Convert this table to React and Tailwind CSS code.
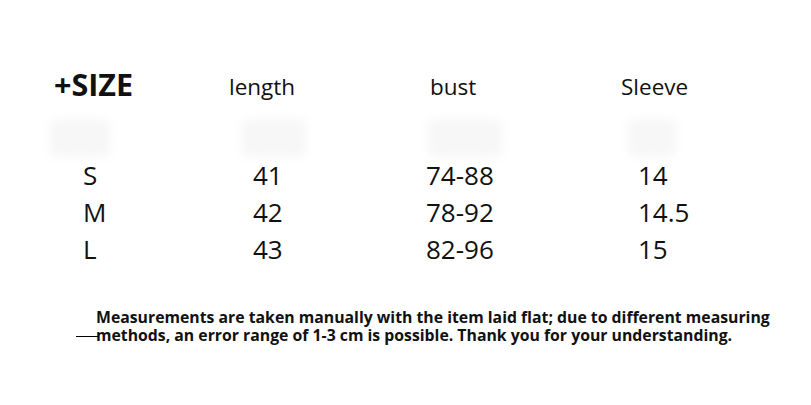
import React from "react";

const rows = [
  { size: "S", length: "41", bust: "74-88", sleeve: "14" },
  { size: "M", length: "42", bust: "78-92", sleeve: "14.5" },
  { size: "L", length: "43", bust: "82-96", sleeve: "15" },
];

function Smudge({ className }) {
  // faint blurry marks left under the header row
  return (
    <div className={`h-[38px] rounded-md bg-[#f7f7f7] blur-[5px] ${className}`} />
  );
}

export default function App() {
  return (
    <div
      className="h-[405px] w-[811px] overflow-hidden bg-white text-[#111]"
      style={{ fontFamily: "'Open Sans', 'Liberation Sans', sans-serif" }}
    >
      <div className="flex items-center pt-[65px]">
        <div className="-mt-[6px] w-[175px] pl-[54px] text-[30.5px] font-bold leading-[44px]">
          +SIZE
        </div>
        <div className="w-[201px] pl-[54px] text-[22.5px] leading-[44px]">length</div>
        <div className="w-[191px] pl-[54px] text-[22.5px] leading-[44px]">bust</div>
        <div className="pl-[54px] text-[22.5px] leading-[44px]">Sleeve</div>
      </div>

      <div className="flex items-center pt-[10px]">
        <Smudge className="ml-[50px] w-[60px]" />
        <Smudge className="ml-[132px] w-[64px]" />
        <Smudge className="ml-[122px] w-[74px]" />
        <Smudge className="ml-[126px] w-[48px]" />
      </div>

      <div className="flex flex-col">
        {rows.map((r) => (
          <div key={r.size} className="flex h-[37px] items-center text-[26px]">
            <div className="w-[253px] pl-[83px]">{r.size}</div>
            <div className="w-[173px]">{r.length}</div>
            <div className="w-[212px]">{r.bust}</div>
            <div>{r.sleeve}</div>
          </div>
        ))}
      </div>

      <div className="relative ml-[96px] mt-[40px] w-[690px] text-[15.8px] font-bold leading-[18px]">
        <p className="whitespace-nowrap">
          Measurements are taken manually with the item laid flat; due to different measuring
          <br />
          methods, an error range of 1-3 cm is possible. Thank you for your understanding.
        </p>
        <span className="absolute left-[-20px] top-[28px] h-px w-[22px] bg-black" />
      </div>
    </div>
  );
}
